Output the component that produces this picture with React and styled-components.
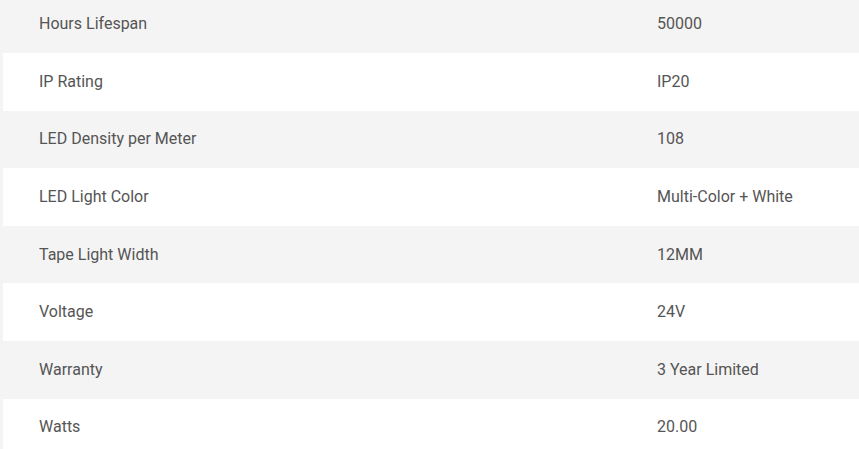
import React from 'react'
import styled, { createGlobalStyle } from 'styled-components'

const GlobalStyle = createGlobalStyle`
    html, body {
        margin: 0;
        padding: 0;
        background: #f4f4f4;
        overflow: hidden;
    }
`

const specs = [
    ['Hours Lifespan', '50000'],
    ['IP Rating', 'IP20'],
    ['LED Density per Meter', '108'],
    ['LED Light Color', 'Multi-Color + White'],
    ['Tape Light Width', '12MM'],
    ['Voltage', '24V'],
    ['Warranty', '3 Year Limited'],
    ['Watts', '20.00'],
]

const Table = styled.div`
    display: flex;
    flex-direction: column;
    margin-top: -4.6px;
    margin-left: 3px;
    width: calc(100vw - 3px);
    font-family: Roboto, "Liberation Sans", sans-serif;
    font-size: 16px;
    line-height: 24px;
    color: #555555;
`

const Row = styled.div`
    display: grid;
    grid-template-columns: 618px 1fr;
    box-sizing: border-box;
    height: 57.6px;
    padding-top: 16.8px;
    background: ${({ striped }) => (striped ? '#f4f4f4' : '#ffffff')};
`

const Cell = styled.div`
    padding-left: 36px;
    white-space: nowrap;
`

export default function App() {
    return <>
        <GlobalStyle />
        <Table>
            {specs.map(([label, value], idx) => (
                <Row key={label} striped={idx % 2 === 0}>
                    <Cell>{label}</Cell>
                    <Cell>{value}</Cell>
                </Row>
            ))}
        </Table>
    </>
}
